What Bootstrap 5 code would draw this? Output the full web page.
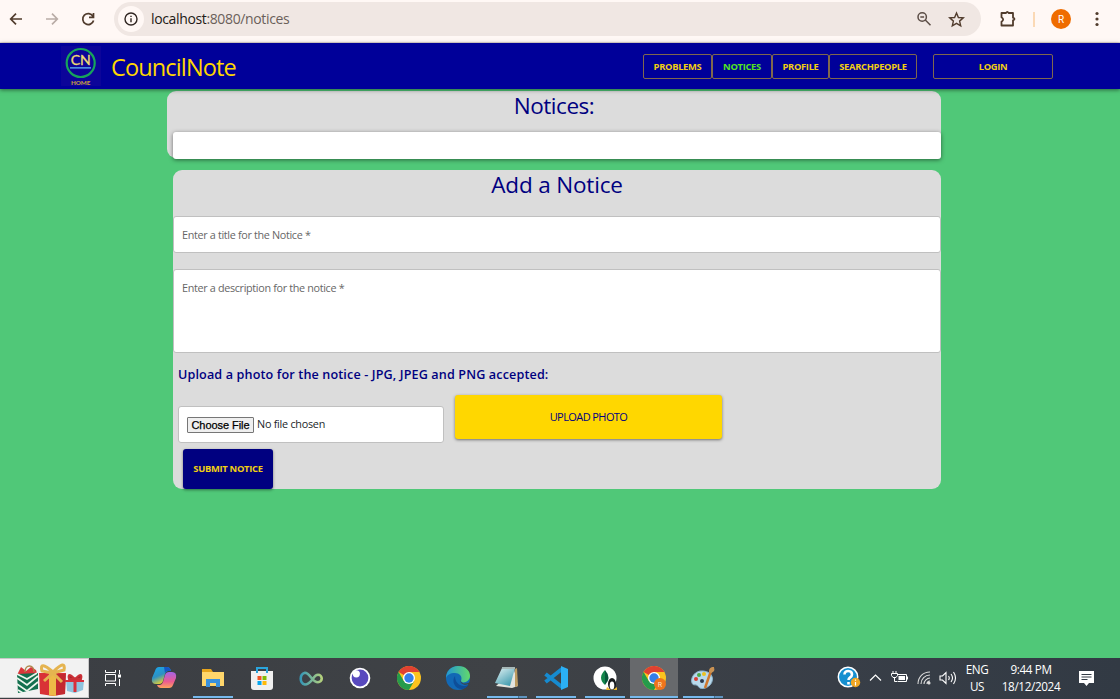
<!DOCTYPE html>
<html lang="en">
<head>
<meta charset="utf-8">
<title>CouncilNote</title>
<meta name="viewport" content="width=device-width, initial-scale=1">
<link href="https://cdn.jsdelivr.net/npm/bootstrap@5.3.0/dist/css/bootstrap.min.css" rel="stylesheet">
<style>
body{font-family:"Open Sans","Noto Sans",sans-serif;background:#50c878;height:699px;overflow:hidden;line-height:1.2}
svg{display:block;flex:none}
.chrome-bar{height:43px;background:#fff8f5;border-bottom:1px solid #e6dcd8;padding-bottom:4px;color:#513c2d}
.url-pill{width:867px;height:34px;margin-left:18px;background:#f0e7e3;border-radius:17px;padding-left:4px;padding-right:16px}
.info-dot{width:26px;height:26px;background:#fff8f5}
.url-text{font-size:14px;letter-spacing:-.36px;color:#6b5f5a;margin-left:7px}
.url-text b{font-weight:400;color:#221a16}
.avatar{width:20px;height:20px;background:#ef6c00;color:#fff;font:10px Roboto,sans-serif;margin-left:16px}
.top-nav{height:46px;background:#000099;box-shadow:0 1px 4px rgba(0,0,0,.5);padding-left:61px;position:relative}
.site-name{color:gold;font-size:23.5px;letter-spacing:-.85px;width:128px;margin-left:10px;padding-top:2px;white-space:nowrap}
.nav-btn{height:25px;border:1px solid #80684d;border-radius:2px;color:#f2cf12;font-size:9.4px;letter-spacing:-.32px;font-weight:700;padding-top:1px;display:flex;align-items:center;justify-content:center;text-decoration:none;white-space:nowrap}
.panel{background:#dcdcdc;color:navy}
.panel h1{font-size:22.5px;letter-spacing:-.17px;font-weight:400;text-align:center;margin:0;line-height:30px}
.notices-panel{width:774px;height:67px;margin:2px 0 0 167px;border-radius:9px;padding-left:6px}
.notices-panel h1{letter-spacing:-.45px;margin-left:-6px}
.notice-list{height:27px;background:#fff;border-radius:3px;box-shadow:0 1px 4px rgba(0,0,0,.5);margin-top:11px}
.add-panel{width:768px;height:319px;margin:12px 0 0 173px;border-radius:9px}
.field{background:#fff;border:1px solid #c0c0c0;border-radius:3px;font-size:10.8px;letter-spacing:-.33px;color:#666;padding-left:8px}
.upload-label{font-size:12.6px;letter-spacing:.13px;font-weight:600;line-height:18px;margin:13px 0 0 5px;white-space:nowrap}
.file-box{width:266px;height:37px;margin-top:11px}
.file-btn{font:11px "Liberation Sans",sans-serif;letter-spacing:-.05px;-webkit-text-stroke:.25px #000;color:#000;background:#efefef;border:1px solid #767676;border-radius:1px;width:67px;height:16px;display:flex;align-items:center;justify-content:center}
.btn-upload{width:267px;height:44px;background:gold;color:navy;border-radius:3px;box-shadow:0 1px 3px rgba(0,0,0,.5);font-size:11px;letter-spacing:-.58px;border:0;padding:0}
.btn-submit{width:90px;height:40px;background:navy;color:#f2cf12;border-radius:3px;box-shadow:0 1px 3px rgba(0,0,0,.45);font-size:9.4px;letter-spacing:-.3px;font-weight:700;border:0;padding:0;margin:6px 0 0 10px}
.task-bar{height:41px;padding-bottom:1px;background:linear-gradient(90deg,#3b3e43,#3f4246 45%,#383e47 75%,#323a44);color:#fff}
.gifts{width:89px;height:40px;background:#f2f2f2;border:1px solid #c8c8c8;border-left:0}
.slot{width:49px;height:40px;padding-right:1px;display:flex;flex-direction:column;align-items:center;padding-top:8px}
.slot::after{content:"";width:40px;height:2px;margin-top:6px}
.slot.open::after{background:#76b9ed}
.slot.multi::after{background:linear-gradient(90deg,#76b9ed 31px,#48749a 31px,#48749a 32px,#5f94c0 32px)}
.slot.active{background:#67696c;width:48px;margin-right:1px;padding-right:0}
.slot.active::after{width:48px;background:#76b9ed}
.tray-text{font-size:11.7px;letter-spacing:-.35px;line-height:17px;text-align:center;white-space:nowrap}
</style>
</head>
<body>
<div class="chrome-bar d-flex align-items-center">
  <svg width="96" height="20" viewBox="0 0 96 20" fill="none" stroke="currentColor" stroke-width="1.7"><path d="M22 10H11M16 4.7 10.700 10 16 15.300"/><path stroke="#b9aca6" d="M46 10h11M52 4.700 57.300 10 52 15.300"/><path d="M93 7.200A5.500 5.500 0 1 0 93.600 11.500M93.500 4v4.300H89"/></svg>
  <div class="url-pill d-flex align-items-center">
    <div class="info-dot rounded-circle d-flex align-items-center justify-content-center"><svg width="14" height="14" viewBox="0 0 14 14" fill="none" stroke="#302622" stroke-width="1.4"><circle cx="7" cy="7" r="6"/><path d="M7 6.200V10.200M7 3.800V5"/></svg></div>
    <div class="url-text me-auto"><b>localhost</b>:8080/notices</div>
    <svg width="16" height="16" viewBox="0 0 16 16" fill="none" stroke="#5c4e47" stroke-width="1.500"><circle cx="6.200" cy="6" r="4.200"/><path d="M9.300 9 14.500 14.200M4.300 6h3.800"/></svg>
    <svg class="ms-3" width="17" height="17" viewBox="0 0 17 17" fill="none" stroke="#513c2d" stroke-width="1.400"><path d="m8.500 2 1.900 4.500 4.900.4-3.700 3.200 1.100 4.800-4.200-2.500-4.200 2.500 1.100-4.800L1.700 6.900l4.900-.4z"/></svg>
  </div>
  <svg style="margin-left:18px" width="18" height="18" viewBox="0 0 18 18" fill="none" stroke="#513c2d" stroke-width="1.800" stroke-linejoin="round"><path d="M2.500 3h4.500Q8.300 .8 9.600 3H14v4.700q3 1.300 0 2.600V15.500H2.500v-3.800q3.300-2.200 0-4.400z"/></svg>
  <div style="width:2px;height:15px;background:#fbd9b5;margin-left:16px"></div>
  <div class="avatar rounded-circle d-flex align-items-center justify-content-center">R</div>
  <svg style="margin-left:24px" width="4" height="16" viewBox="0 0 4 16" fill="#513c2d"><circle cx="2" cy="2.500" r="1.600"/><circle cx="2" cy="8" r="1.600"/><circle cx="2" cy="13.500" r="1.600"/></svg>
</div>
<nav class="top-nav d-flex align-items-center">
  <svg width="40" height="42" viewBox="0 0 40 42"><path fill="#0c0599" d="M0 1h40v40H0z"/><circle cx="19.700" cy="18" r="14" fill="none" stroke="#17a45b" stroke-width="2.200"/><text x="19.800" y="20" text-anchor="middle" font-size="14" fill="#f2dc72" stroke="#f2dc72" stroke-width=".3" font-family="Lato,sans-serif">CN</text><path fill="#4b8be0" d="M9 22h21v1.700H9z"/><text x="19.700" y="39.500" text-anchor="middle" font-size="6.300" font-weight="900" fill="#c39a45" font-family="Lato,sans-serif">HOME</text></svg>
  <div class="site-name">CouncilNote</div>
  <div class="d-flex" style="margin-left:404px">
    <a class="nav-btn" style="width:69px">PROBLEMS</a><a class="nav-btn" style="width:60px;color:#54e61c">NOTICES</a><a class="nav-btn" style="width:57px">PROFILE</a><a class="nav-btn" style="width:88px">SEARCHPEOPLE</a>
  </div>
  <a class="nav-btn ms-3" style="width:120px">LOGIN</a>
</nav>
<main style="height:569px" class="overflow-hidden">
  <section class="panel notices-panel"><h1>Notices:</h1><div class="notice-list"></div></section>
  <section class="panel add-panel">
    <h1>Add a Notice</h1>
    <div class="field d-flex align-items-center" style="height:37px;margin-top:16px;padding-top:2px">Enter a title for the Notice *</div>
    <div class="field" style="height:84px;margin-top:16px;padding-top:12px">Enter a description for the notice *</div>
    <div class="upload-label">Upload a photo for the notice - JPG, JPEG and PNG accepted:</div>
    <div class="d-flex" style="margin:11px 0 0 5px">
      <div class="field file-box d-flex align-items-center"><span class="file-btn">Choose File</span><span class="file-name text-dark" style="margin-left:3px;letter-spacing:-.25px">No file chosen</span></div>
      <button class="btn-upload" style="margin-left:11px"><span>UPLOAD PHOTO</span></button>
    </div>
    <button class="btn-submit">SUBMIT NOTICE</button>
  </section>
</main>
<footer class="task-bar d-flex align-items-center">
  <div class="gifts"><svg width="88" height="38" viewBox="0 0 88 38">
    <path fill="#d9363b" d="m17 16 4-8 5 4 5-4 5 3 2 6z"/><path d="M25 13c0-8 9-8 9 0" fill="none" stroke="#ad884c" stroke-width="1.500"/><path fill="#12704e" d="m17 15 21-1v16l-20 4z"/><path d="m17 19 10 7 11-9M17 25l10 7 11-9M18 31l5 3M17 15l10 5 10-6" fill="none" stroke="#edf5ed" stroke-width="1.700"/>
    <path fill="#d93236" d="M39 14h27l-1 21-12 2-13-2z"/><path fill="#a91e2b" d="M53 15h13l-1 20-12 2z" opacity=".45"/><path fill="#edb947" d="M49 13h7v24l-7-.5z"/><path d="M53 13Q39 1 42 12l10 2M53 13Q66 0 64 11l-11 3M53 14l-9 8M53 14l9 9" fill="none" stroke="#e5b450" stroke-width="3"/>
    <path fill="#8fc4df" d="M66 21h18l-1 10-8 3-8-2z"/><path fill="#d92f3b" d="M65 21h19v2H65zM73.500 22h3v11h-3z"/><path d="M75 20q-8-8-6 0zM75 20q8-8 6 0z" fill="#a8262f" stroke="#cb3037" stroke-width="2"/></svg></div>
  <div class="d-flex" style="margin-left:2px">
    <div class="slot"><svg style="margin-right:4px" width="24" height="24" viewBox="0 0 24 24" fill="none" stroke="#fff" stroke-width="1"><path d="M4.500 4v2.500h10V4M4.500 20v-2.500h10V20M4.500 8.500h10v6.500h-10zM18.500 4v4M18.500 13v7"/><path fill="#fff" stroke="none" d="M17 8.500h3v3h-3z"/></svg></div>
    <div class="slot"><svg width="26" height="24" viewBox="0 0 26 24"><defs><linearGradient id="ca" x2=".5" y2="1"><stop stop-color="#18a8ed"/><stop offset=".55" stop-color="#2e91c3"/><stop offset="1" stop-color="#f4d624"/></linearGradient><linearGradient id="cb" x2="0" y2="1"><stop stop-color="#a464e8"/><stop offset=".6" stop-color="#ed5b90"/><stop offset="1" stop-color="#ffa45c"/></linearGradient></defs><path fill="url(#ca)" d="M8 1h8q3 0 4 4h-3q-2 0-3 3l-2 7q-1 3-4 3H5q-5 0-4-6L4 5q1-4 4-4z"/><path fill="url(#cb)" d="M18 22h-8q-3 0-4-3h3q2 0 3-3l2-7q1-3 4-3h3q5 0 4 6l-3 7q-1 3-4 3z"/><path fill="#1557c6" d="M13 1h3q3 0 4 4h-3q-2 0-3 2z"/></svg></div>
    <div class="slot open"><svg width="24" height="24" viewBox="0 0 24 24"><path fill="#e7a51c" d="M1 3h9l2 3v6H1z"/><path fill="#ffd66b" d="M1 6h22v14H1z"/><path fill="#3991dd" d="M5 13h14v8h-4v-4H9v4H5z"/></svg></div>
    <div class="slot"><svg width="24" height="24" viewBox="0 0 24 24"><path fill="#f0f0f0" d="M1 5h22v16q0 3-3 3H4q-3 0-3-3z"/><path d="M7 7V2h10v5" fill="none" stroke="#2aa5dd" stroke-width="2"/><path fill="#f35325" d="M7.500 10h4v4h-4z"/><path fill="#81bc06" d="M12.500 10h4v4h-4z"/><path fill="#05a6f0" d="M7.500 15h4v4h-4z"/><path fill="#ffba08" d="M12.500 15h4v4h-4z"/></svg></div>
    <div class="slot"><svg width="26" height="24" viewBox="0 0 26 24"><defs><linearGradient id="inf"><stop stop-color="#3798b6"/><stop offset="1" stop-color="#b4d17c"/></linearGradient></defs><path fill="none" stroke="url(#inf)" stroke-width="2.600" d="M14 14c-2.500 3-4 4.500-7 4.500A5.500 6 0 0 1 7 6.800c5 0 7 9.500 13 9.500a3.700 3.700 0 0 0 0-7.500c-3 0-4 2.500-6 5.200z"/></svg></div>
    <div class="slot"><svg width="24" height="24" viewBox="0 0 24 24"><circle cx="12" cy="12" r="10.300" fill="#fff"/><circle cx="12" cy="12" r="8.400" fill="#5849be"/><circle cx="8.300" cy="7.800" r="3.600" fill="#fff"/></svg></div>
    <div class="slot"><svg width="24" height="24" viewBox="0 0 24 24"><g id="chrome"><circle cx="12" cy="12" r="12" fill="#fcc31e"/><path fill="#df4131" d="M12 12 1.600 6A12 12 0 0 1 22.400 6H12z"/><path fill="#269b4b" d="M1.600 6A12 12 0 0 0 12 24l5.200-9L12 12 6.800 15z"/><circle cx="12" cy="12" r="6" fill="#fff"/><circle cx="12" cy="12" r="4.700" fill="#347eea"/></g></svg></div>
    <div class="slot"><svg width="24" height="24" viewBox="0 0 24 24"><defs><linearGradient id="ed"><stop stop-color="#2196d5"/><stop offset="1" stop-color="#62d96b"/></linearGradient></defs><circle cx="12" cy="12" r="12" fill="#1268b5"/><path fill="url(#ed)" d="M0 12C0 5 5 0 12 0c8 0 12 5 12 10 0 6-8 8-9 5 2-5-2-8-6-8-5 0-8 2-9 5z"/><path fill="#3f4246" d="M14 12.500c0 5 5 6.500 10 3.500v2l-1.500 0c-4 2-9 0-8.500-5.500z"/><path fill="#0e4e99" d="M9 10c-4 5 0 14 8 13 3-1 5-3 5-4-6 3-13-1-13-9z"/></svg></div>
    <div class="slot open multi"><svg width="26" height="24" viewBox="0 0 26 24"><defs><linearGradient id="np" x2=".7" y2="1"><stop stop-color="#e5f4f5"/><stop offset="1" stop-color="#409baf"/></linearGradient></defs><path fill="#e3e4df" d="m20 3 4 17-6 2-16-2z"/><path fill="#bd9b61" d="m21 3 2-1 1 18-3 1z"/><path fill="url(#np)" d="M8 2h13l-5 18L1 17z"/><path d="M8 2h13" stroke="#a7b8b7" stroke-width="2"/></svg></div>
    <div class="slot open"><svg width="24" height="24" viewBox="0 0 24 24"><path d="M1.500 8 18 21M1.500 16 18 3" stroke="#168bd0" stroke-width="4"/><path fill="#2bb0f5" d="m17 0 7 3v18l-7 3z"/></svg></div>
    <div class="slot open"><svg width="24" height="24" viewBox="0 0 24 24"><circle cx="12" cy="12" r="11.500" fill="#fff"/><path fill="#12864b" d="M12 4q-8 8 0 15z"/><path fill="#07583b" d="M12 4q7 8 0 15z"/><ellipse cx="19" cy="18" rx="4" ry="6" fill="#171a1c"/><ellipse cx="19" cy="19.500" rx="2.300" ry="4" fill="#fff"/><path fill="#efb82a" d="m14 21 4 3h-5zM24 21l-4 3h4z"/></svg></div>
    <div class="slot active"><svg width="24" height="24" viewBox="0 0 24 24"><use href="#chrome"/><circle cx="18" cy="18" r="6" fill="#ef741d"/><text x="18" y="20.500" font-size="7" text-anchor="middle" fill="#ffe0c4" font-family="Roboto">R</text></svg></div>
    <div class="slot open multi"><svg width="26" height="24" viewBox="0 0 26 24"><path fill="#b9d9ec" stroke="#8cb4cc" d="M13 5C5 4 0 12 2 17c1 3 4 1 6 3 2 4 8 3 12-1s4-13-7-14z"/><circle cx="6" cy="13" r="2" fill="#d83f35"/><circle cx="9" cy="9" r="2" fill="#4ba94b"/><circle cx="14" cy="8" r="2" fill="#edc11f"/><circle cx="12" cy="15" r="2" fill="#2d3b4f"/><path d="m15 22 6-17" stroke="#d0782d" stroke-width="2.500"/><path fill="#c99253" d="M19 6c0-5 3-5 5-5 0 2 2 4-3 6z"/></svg></div>
  </div>
  <div class="d-flex align-items-center ms-auto" style="margin-right:25px">
    <svg width="24" height="24" viewBox="0 0 24 24"><circle cx="11" cy="11" r="9.700" fill="#168fd0" stroke="#fff" stroke-width="1.500"/><path d="M7.500 8.500c0-5 7.500-4.300 7.500 0 0 3-3.500 2.700-3.500 5.500M11.500 16v2.500" fill="none" stroke="#fff" stroke-width="2.600"/><circle cx="18.500" cy="16.500" r="4.700" fill="#f0a522"/><path d="M18.500 13.500v1.300M18.500 16v3.500" stroke="#fff" stroke-width="1.200"/></svg>
    <svg style="margin-left:8px" width="13" height="10" viewBox="0 0 13 10" fill="none" stroke="#fff" stroke-width="1.200"><path d="m1 7.500 5.500-5.500L12 7.500"/></svg>
    <svg style="margin-left:9px" width="17" height="16" viewBox="0 0 17 16" fill="none" stroke="#fff"><path d="M7 4.500h8.500v7H6.500M16.500 6.500v3M2 1v2M5 1v2M.5 3.500h6v2l-1.500 2H2L.5 5.500zM3.500 7.500v4H6"/><path fill="#fff" stroke="none" d="M7.500 6h6.500v4H7.500z"/></svg>
    <svg style="margin-left:9px" width="14" height="16" viewBox="0 0 14 16" fill="none" stroke="#ddd" stroke-width="1.100"><path d="M1 14C1 7 6 2 13 2M4 14c0-5 4-9 9-9M7 14c0-3 3-6 6-6M10 14c0-2 1-3 3-3"/><circle cx="12" cy="13" r="1" fill="#fff"/></svg>
    <svg style="margin-left:8px" width="18" height="16" viewBox="0 0 18 16" fill="none" stroke="#fff" stroke-width="1.100"><path d="M1 6h2.500L7 2.500v11L3.500 10H1zM9.500 6q1.500 2 0 4M12 4q3 4 0 8M14.500 2q4 6 0 12"/></svg>
    <div class="tray-text" style="width:24px;margin-left:8px"><div>ENG</div><div>US</div></div>
    <div class="tray-text" style="width:60px;margin-left:12px"><div>9:44 PM</div><div>18/12/2024</div></div>
    <svg style="margin-left:17px" width="17" height="17" viewBox="0 0 17 17"><path fill="#fff" d="M1 1h15v12h-5l-2.500 3L6 13H1z"/><path d="M3.500 4.500h10M3.500 7h10M3.500 9.500h6" stroke="#333b45"/></svg>
  </div>
</footer>
</body>
</html>
